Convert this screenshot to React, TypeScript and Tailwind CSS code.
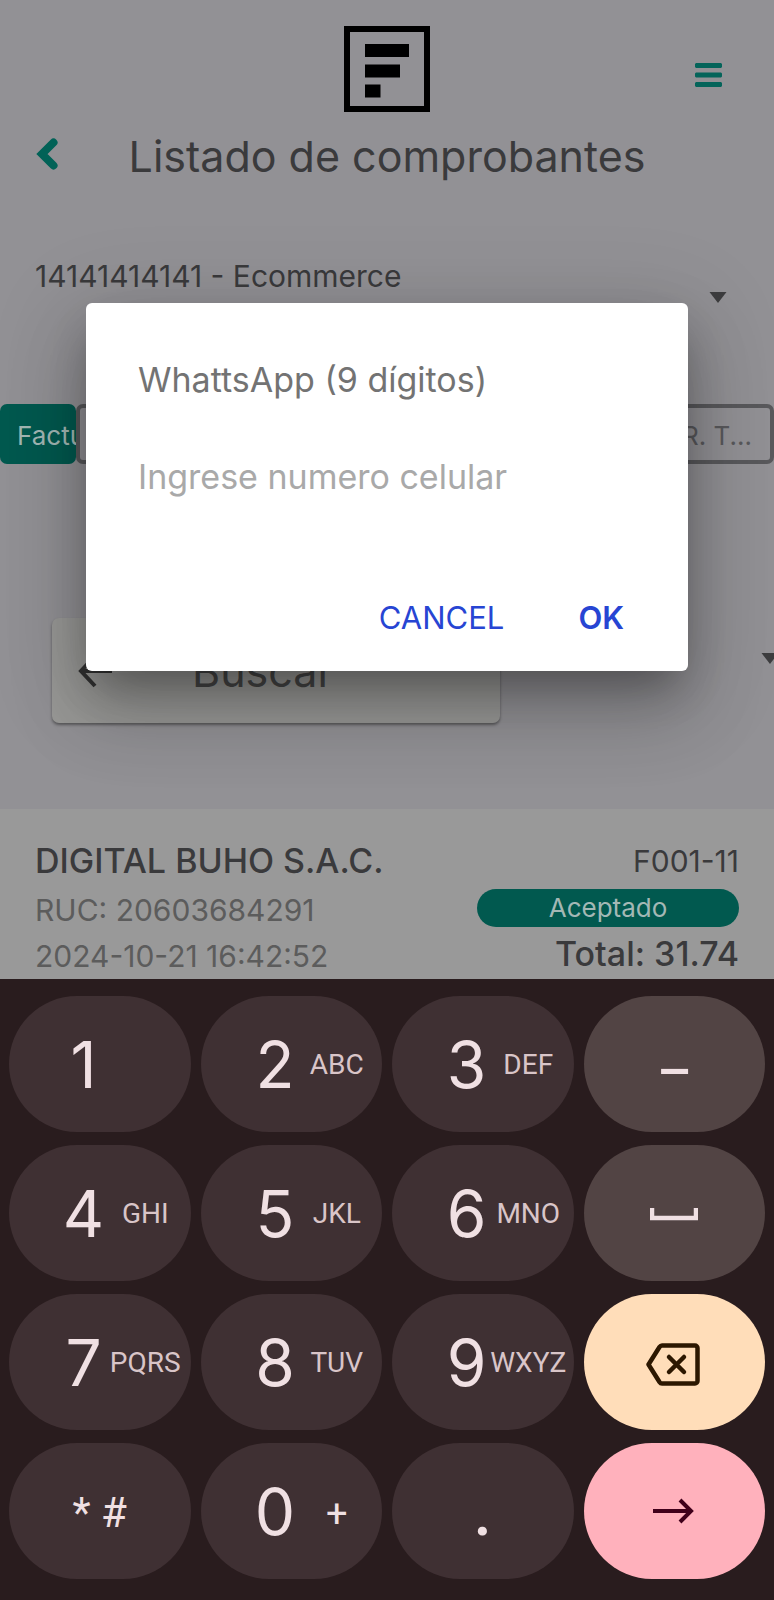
import React from "react";

type KeyProps = { digit: string; letters?: string; symbol?: string };

const keyBase =
  "flex h-[136px] min-w-0 items-center rounded-full font-['Roboto',sans-serif] text-[#f0e0e3]";

function DigitKey({ digit, letters, symbol }: KeyProps) {
  return (
    <button type="button" className={`${keyBase} bg-[#3f3033] pt-[2px] pl-[58px]`}>
      <span className="flex w-[33px] shrink-0 justify-center font-['Inter',sans-serif] text-[64px] leading-none">
        {digit}
      </span>
      {letters && (
        <span className="flex flex-1 justify-center text-[28px] leading-none text-[#d9c5c8]">
          {letters}
        </span>
      )}
      {symbol && (
        <span className="flex flex-1 justify-center pt-[4px] text-[38px] leading-none">{symbol}</span>
      )}
    </button>
  );
}

function Logo() {
  return (
    <svg viewBox="0 0 86 86" className="size-[86px]" role="img" aria-label="Facturador">
      <rect x="3" y="3" width="80" height="80" fill="none" stroke="#000" strokeWidth="6" />
      <path d="M21 18h44v13H21zM21 38.500h35v13H21zM21 58.500h15.500v13H21z" fill="#000" />
    </svg>
  );
}

function Caret() {
  return (
    <svg viewBox="0 0 18 11" className="h-[11px] w-[18px] shrink-0" aria-hidden="true">
      <path d="M0.500 0h17L9 11z" fill="#3d3d3f" />
    </svg>
  );
}

export default function App() {
  return (
    <div className="flex min-h-screen flex-col bg-[#929195] font-['Inter',sans-serif] text-[#3a3a3c]">
      <div className="relative flex flex-1 flex-col overflow-hidden">
        <header>
          <div className="grid grid-cols-3 items-center px-[52px] pt-[26px]">
            <span />
            <div className="flex justify-center">
              <Logo />
            </div>
            <button type="button" aria-label="Menú" className="flex justify-end pt-[12px]">
              <svg viewBox="0 0 27 24" className="h-[24px] w-[27px]">
                <path
                  d="M1 0h25l1 1v3l-1 1H1L0 4V1zM1 9.500h25l1 1v3l-1 1H1l-1-1v-3zM1 19h25l1 1v3l-1 1H1l-1-1v-3z"
                  fill="#04645a"
                />
              </svg>
            </button>
          </div>
          <div className="flex h-[84px] items-center px-9 pt-[4px]">
            <button type="button" aria-label="Volver" className="w-6 shrink-0 pb-[4px]">
              <svg viewBox="0 0 24 34" className="h-[34px] w-6">
                <path
                  d="M17.500 5.500L6 17l11.500 11.500"
                  fill="none"
                  stroke="#016257"
                  strokeWidth="8"
                  strokeLinejoin="miter"
                  strokeLinecap="round"
                />
              </svg>
            </button>
            <h1 className="flex-1 pr-6 text-center text-[43px] leading-[52px]">
              Listado de comprobantes
            </h1>
          </div>
        </header>

        <button
          type="button"
          className="mt-[60px] flex h-[62px] items-start justify-between pr-[47px] pl-[35px] text-left text-[30px] leading-[40px]"
        >
          <span>14141414141 - Ecommerce</span>
          <span className="pt-[36px]">
            <Caret />
          </span>
        </button>

        <div className="mt-[86px] flex h-[60px] text-[26px]">
          <button
            type="button"
            className="w-[76px] overflow-hidden rounded-[7px] bg-[#01594f] pt-[2px] pl-[17px] text-left text-[#a3b8b5]"
          >
            Factura
          </button>
          <button
            type="button"
            aria-label="Boletas"
            className="flex-1 rounded-[7px] border-4 border-[#59595c]"
          />
          <button
            type="button"
            className="w-[110px] rounded-[7px] border-4 border-[#59595c] pt-[2px] pr-[18px] text-right text-[#59595c]"
          >
            R. T...
          </button>
        </div>

        <div className="mt-[154px] flex items-center justify-between pl-[52px]">
          <button
            type="button"
            className="flex h-[105px] w-[448px] items-center rounded-[7px] bg-[#999997] pl-[26px] text-left text-[#474747] shadow-[0_2px_3px_rgba(0,0,0,0.4)]"
          >
            <svg viewBox="0 0 34 34" className="size-[34px]" aria-hidden="true">
              <path d="M34 17H3M17 2L3 17l14 15" fill="none" stroke="#333" strokeWidth="4" />
            </svg>
            <span className="pl-[80px] text-[43px] leading-[52px]">Buscar</span>
          </button>
          <span className="-mr-[5px] pb-[24px]">
            <Caret />
          </span>
        </div>

        <article className="mt-[86px] flex flex-1 justify-between bg-[#999] px-[35px] pt-[29px]">
          <div>
            <h2 className="mb-[3px] text-[34px] leading-[46px] font-medium">DIGITAL BUHO S.A.C.</h2>
            <p className="text-[30px] leading-[46px] text-[#5c5c5c]">RUC: 20603684291</p>
            <p className="text-[30px] leading-[46px] text-[#5c5c5c]">2024-10-21 16:42:52</p>
          </div>
          <div className="flex w-[262px] flex-col text-right">
            <span className="text-[30px] leading-[46px]">F001-11</span>
            <span className="mt-[5px] mb-[4px] h-[38px] rounded-full bg-[#01594f] text-center text-[26px] leading-[38px] text-[#a3b8b5]">
              Aceptado
            </span>
            <span className="text-[34px] leading-[46px] font-medium">Total: 31.74</span>
          </div>
        </article>

        <div className="absolute inset-0 flex items-center justify-center pb-[6px]">
          <div
            role="dialog"
            aria-labelledby="dialog-title"
            className="flex h-[368px] w-[78%] max-w-[602px] flex-col rounded-[6px] bg-white px-[52px] pt-[51px] shadow-[0_22px_40px_-10px_rgba(0,0,0,0.3),0_40px_76px_6px_rgba(0,0,0,0.16),0_18px_92px_16px_rgba(0,0,0,0.1)]"
          >
            <label id="dialog-title" htmlFor="phone" className="text-[34px] leading-[52px] text-[#737373]">
              WhattsApp (9 dígitos)
            </label>
            <input
              id="phone"
              type="tel"
              placeholder="Ingrese numero celular"
              className="mt-[42px] h-[58px] w-full text-[34px] outline-none placeholder:text-[#a9a9a9]"
            />
            <div className="mt-[89px] flex justify-end gap-[74px] pr-[12px] text-[31px] leading-[46px] text-[#2745d3]">
              <button type="button">CANCEL</button>
              <button type="button" className="font-semibold">
                OK
              </button>
            </div>
          </div>
        </div>
      </div>

      <div className="relative grid grid-cols-4 gap-x-[10px] gap-y-[13px] bg-[#291c1e] px-[9px] pt-[17px] pb-[21px]">
        <DigitKey digit="1" />
        <DigitKey digit="2" letters="ABC" />
        <DigitKey digit="3" letters="DEF" />
        <button type="button" className={`${keyBase} justify-center bg-[#524444] pt-[14px] text-[54px] font-medium`}>
          –
        </button>
        <DigitKey digit="4" letters="GHI" />
        <DigitKey digit="5" letters="JKL" />
        <DigitKey digit="6" letters="MNO" />
        <button type="button" aria-label="Espacio" className={`${keyBase} justify-center bg-[#524444] pt-[2px]`}>
          <svg viewBox="0 0 48 14" className="h-[14px] w-[48px]">
            <path d="M2 1v10h44V1" fill="none" stroke="#f0e0e3" strokeWidth="4.5" />
          </svg>
        </button>
        <DigitKey digit="7" letters="PQRS" />
        <DigitKey digit="8" letters="TUV" />
        <DigitKey digit="9" letters="WXYZ" />
        <button type="button" aria-label="Borrar" className={`${keyBase} justify-center bg-[#ffddb9] pr-[2px]`}>
          <svg viewBox="0 0 54 43" className="mt-[4px] h-[43px] w-[54px]">
            <path
              d="M16 2.500h33a2.500 2.500 0 0 1 2.500 2.500v33a2.500 2.500 0 0 1-2.500 2.500H16q-1.500 0-2.500-1.500L2.500 21.500 13.500 4q1-1.500 2.500-1.500z"
              fill="none"
              stroke="#2c1700"
              strokeWidth="4.5"
              strokeLinejoin="round"
            />
            <path
              d="M23 14l15 15M38 14L23 29"
              fill="none"
              stroke="#2c1700"
              strokeWidth="4.5"
              strokeLinecap="round"
            />
          </svg>
        </button>
        <button type="button" className={`${keyBase} justify-center bg-[#3f3033] pt-[2px] text-[42px]`}>
          * #
        </button>
        <DigitKey digit="0" symbol="+" />
        <button type="button" className={`${keyBase} justify-center bg-[#3f3033] pt-[2px] text-[66px] font-medium`}>
          .
        </button>
        <button type="button" aria-label="Siguiente" className={`${keyBase} justify-center bg-[#ffb1bc]`}>
          <svg viewBox="0 0 42 26" className="h-[26px] w-[42px]">
            <path d="M0 13h37M27 2l11 11-11 11" fill="none" stroke="#40001a" strokeWidth="4" />
          </svg>
        </button>
      </div>
    </div>
  );
}
